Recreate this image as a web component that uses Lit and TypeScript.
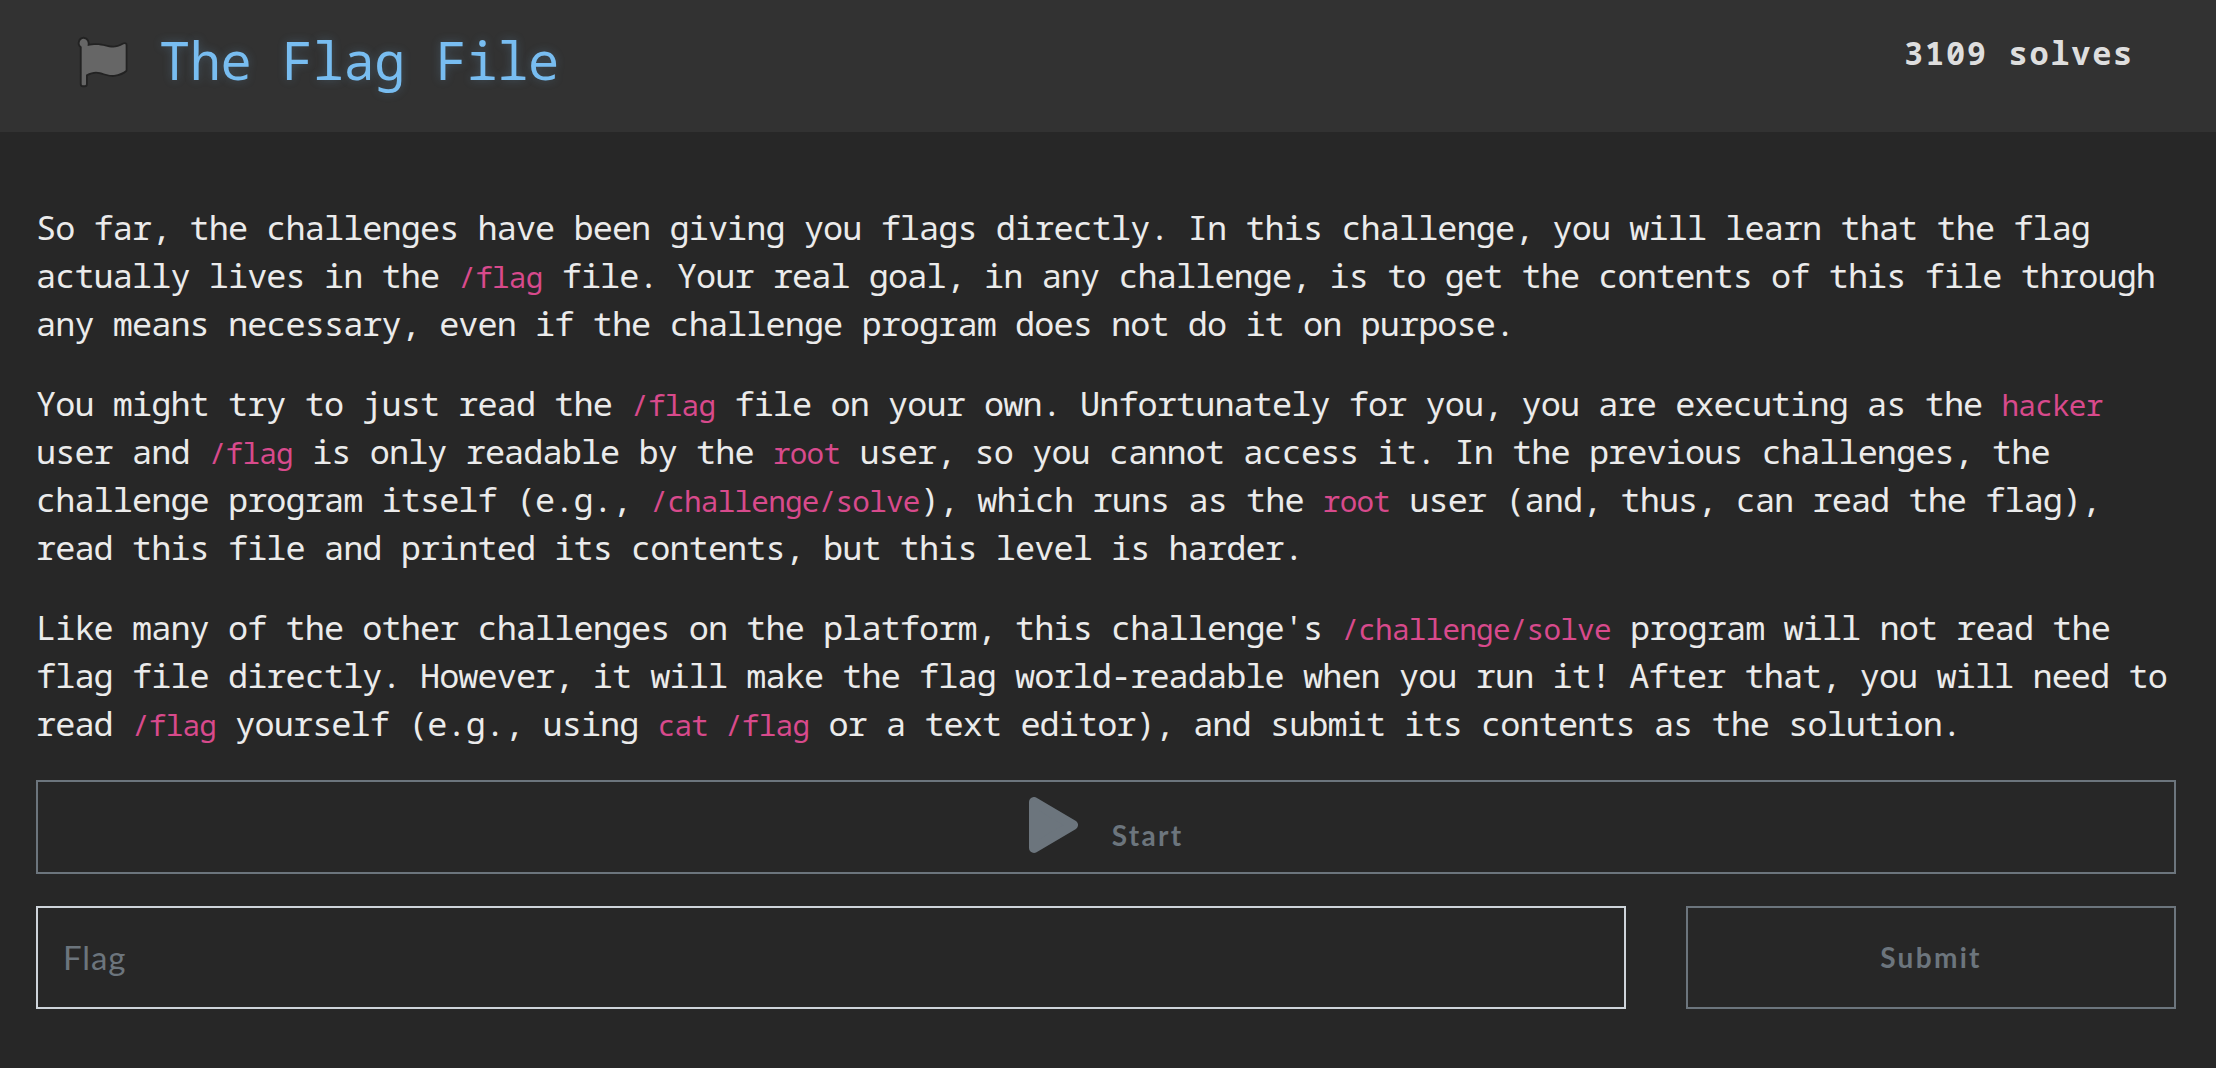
import { LitElement, html, css } from "lit";

class ChallengeHeader extends LitElement {
  static styles = css`
    :host { display: block; }
    .bar { display: flex; justify-content: space-between; align-items: flex-start; box-sizing: border-box; height: 132px; padding: 20px 82px 0 60px; background: #323232; font-family: "Noto Sans Mono", "DejaVu Sans Mono", monospace; }
    .left { display: flex; align-items: flex-start; }
    .flag { display: block; width: 90px; height: 90px; margin-right: 9px; }
    .title { margin: 0; padding-top: 5px; font-size: 52px; line-height: 70px; font-weight: 450; letter-spacing: -0.45px; color: #78bdf1; text-shadow: 0 0 10px rgba(120, 189, 241, 0.25); white-space: pre; }
    .solves { padding-top: 9px; font-size: 32px; line-height: 48px; font-weight: 700; letter-spacing: 1.7px; color: #dedede; white-space: pre; }
  `;
  render() {
    return html`
      <header class="bar">
        <div class="left">
          <svg class="flag" viewBox="0 0 270 270" aria-hidden="true">
            <path d="M71 56a13 13 0 0 0-6 24V192q0 4 3 4h7q3 0 3-4V164C118 142 130 168 162 165Q186 161 197 151V76q0-6-6-3C148 98 138 66 83 78Q86 58 71 56Z" fill="#666" stroke="#222" stroke-width="11" stroke-linejoin="round" paint-order="stroke" />
          </svg>
          <h1 class="title">The Flag File</h1>
        </div>
        <div class="solves">3109 solves</div>
      </header>`;
  }
}
customElements.define("challenge-header", ChallengeHeader);

class AppRoot extends LitElement {
  static styles = css`
    :host { display: block; min-height: 1068px; background: #272727; }
    .content { padding: 71px 40px 0 36px; }
    p { margin: 0 0 32px; font: 450 33.6px/48px "Noto Sans Mono", "DejaVu Sans Mono", monospace; letter-spacing: -0.95px; color: #ebebeb; white-space: nowrap; }
    code { font: 400 29.4px/0 "Noto Sans Mono", "DejaVu Sans Mono", monospace; letter-spacing: -0.8px; color: #d84a8c; }
    button, input { box-sizing: border-box; margin: 0; border-radius: 0; background: transparent; outline: none; }
    button { border: 2px solid #6c757d; color: #6c757d; font: 700 28px/40px Lato, sans-serif; letter-spacing: 2.3px; }
    .start { display: flex; align-items: flex-start; justify-content: center; gap: 34px; width: 100%; height: 94px; margin-top: 33px; padding: 15px 0 0; }
    .start svg { display: block; width: 49px; height: 56px; }
    .start span { padding-top: 18px; }
    .row { display: grid; grid-template-columns: 1590px 490px; gap: 60px; margin-top: 32px; }
    input { height: 103px; border: 2px solid #ced4da; padding: 0 25px 1px; font: 400 33px/48px Lato, sans-serif; letter-spacing: 0.9px; color: #ced4da; }
    input::placeholder { color: #6c757d; opacity: 1; }
    .submit { height: 103px; padding: 0 0 2px; }
    p:last-of-type { margin-bottom: 0; }
  `;
  render() {
    return html`
      <challenge-header></challenge-header>
      <main class="content">
        <p>So far, the challenges have been giving you flags directly. In this challenge, you will learn that the flag<br>actually lives in the <code>/flag</code> file. Your real goal, in any challenge, is to get the contents of this file through<br>any means necessary, even if the challenge program does not do it on purpose.</p>
        <p>You might try to just read the <code>/flag</code> file on your own. Unfortunately for you, you are executing as the <code>hacker</code><br>user and <code>/flag</code> is only readable by the <code>root</code> user, so you cannot access it. In the previous challenges, the<br>challenge program itself (e.g., <code>/challenge/solve</code>), which runs as the <code>root</code> user (and, thus, can read the flag),<br>read this file and printed its contents, but this level is harder.</p>
        <p>Like many of the other challenges on the platform, this challenge's <code>/challenge/solve</code> program will not read the<br>flag file directly. However, it will make the flag world-readable when you run it! After that, you will need to<br>read <code>/flag</code> yourself (e.g., using <code>cat /flag</code> or a text editor), and submit its contents as the solution.</p>
        <button class="start">
          <svg viewBox="0 0 49 56" aria-hidden="true"><path d="M5 5V51L44 28Z" fill="#6c757d" stroke="#6c757d" stroke-width="10" stroke-linejoin="round" /></svg>
          <span>Start</span>
        </button>
        <div class="row">
          <input placeholder="Flag">
          <button class="submit">Submit</button>
        </div>
      </main>`;
  }
}
customElements.define("app-root", AppRoot);
